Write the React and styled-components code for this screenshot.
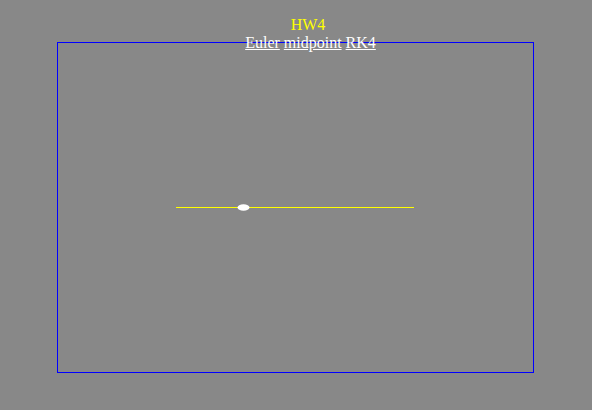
import React from "react";
import styled, { createGlobalStyle } from "styled-components";

const Global = createGlobalStyle`
  html, body { margin: 0; padding: 0; background: #888888; }
  body { font-family: "Liberation Serif", "Times New Roman", serif; font-size: 16px; }
`;

const Page = styled.div`
  width: 592px;
  height: 410px;
  display: flex;
  flex-direction: column;
  align-items: center;
  padding-top: 16px;
  padding-right: 1px;
  box-sizing: border-box;
`;

const Header = styled.header`
  position: relative;
  z-index: 1;
  display: flex;
  flex-direction: column;
  align-items: center;
  line-height: 18px;
  padding-left: ${(p) => p.$shift}px;
`;

const Title = styled.div`
  color: #ffff00;
`;

const Links = styled.nav`
  display: flex;
  gap: 4px;
  padding-left: 5px;
`;

const Link = styled.a`
  color: #ffffff;
  text-decoration: underline;
  cursor: pointer;
`;

const Stage = styled.div`
  width: 475px;
  height: 329px;
  border: 1px solid #0000ff;
  margin-top: -10px;
`;

const Sim = styled.svg`
  display: block;
  width: 100%;
  height: 100%;
`;

export default function App() {
  return (
    <>
      <Global />
      <Page>
        <Header $shift={25}>
          <Title>HW4</Title>
          <Links>
            <Link>Euler</Link>
            <Link>midpoint</Link>
            <Link>RK4</Link>
          </Links>
        </Header>
        <Stage>
          <Sim viewBox="0 0 475 329">
            <line x1="118" y1="164.5" x2="356" y2="164.5" stroke="#ffff00" strokeWidth="1" />
            <ellipse cx="185.5" cy="164.5" rx="6" ry="3.2" fill="#ffffff" />
          </Sim>
        </Stage>
      </Page>
    </>
  );
}
